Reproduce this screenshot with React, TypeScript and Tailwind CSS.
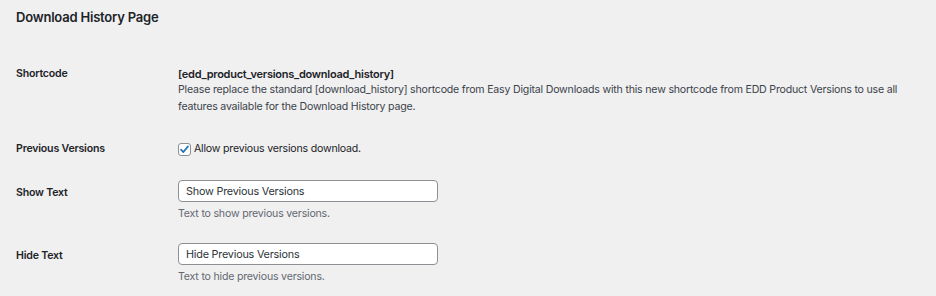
import React, { useState } from 'react';

const font = "font-['Inter','Liberation_Sans',sans-serif]";

type RowProps = {
	label: string;
	labelPad?: string;
	className?: string;
	children: React.ReactNode;
};

const Row = ({ label, labelPad, className, children }: RowProps) => (
	<div className={`flex ${className ?? ''}`}>
		<div className={`w-[162px] shrink-0 font-semibold text-[#1d2327] ${labelPad ?? ''}`}>{label}</div>
		<div className="flex-1">{children}</div>
	</div>
);

const TextField = ({ initial }: { initial: string }) => {
	const [value, setValue] = useState(initial);
	return (
		<input
			value={value}
			onChange={(e) => setValue(e.target.value)}
			className="block w-[260px] h-[22px] px-[7px] bg-white border border-[#8c8f94] rounded-[4px] text-[10.8px] tracking-[-0.2px] text-[#2c3338] outline-none"
		/>
	);
};

export default function App() {
	const [allow, setAllow] = useState(true);

	return (
		<div className={`w-[936px] h-[296px] bg-[#f0f0f1] pl-4 pt-[7px] text-[10.6px] leading-4 tracking-[-0.2px] text-[#1d2327] ${font}`}>
			<h2 className="text-[13px] leading-5 font-semibold tracking-[-0.2px] text-[#1d2327]">Download History Page</h2>

			<Row label="Shortcode" className="mt-[39px]">
				<div className="font-semibold text-[11px] tracking-[-0.25px]">[edd_product_versions_download_history]</div>
				<p className="text-[#3c434a] leading-[16.5px]">
					Please replace the standard [download_history] shortcode from Easy Digital Downloads with this new shortcode from EDD Product Versions to use all
					features available for the Download History page.
				</p>
			</Row>

			<Row label="Previous Versions" className="mt-[26px]">
				<label className="flex items-center gap-[3px] cursor-pointer">
					<button
						type="button"
						onClick={() => setAllow((v) => !v)}
						className="w-[13px] h-[13px] bg-white border border-[#8c8f94] rounded-[3px] flex items-center justify-center"
					>
						{allow && (
							<svg width="11" height="11" viewBox="0 0 12 12">
								<path d="M2.2 6.2 L4.8 8.8 L9.8 2.6" fill="none" stroke="#2271b1" strokeWidth="1.8" strokeLinecap="round" strokeLinejoin="round" />
							</svg>
						)}
					</button>
					<span>Allow previous versions download.</span>
				</label>
			</Row>

			<Row label="Show Text" labelPad="pt-[5px]" className="mt-[23px]">
				<TextField initial="Show Previous Versions" />
				<p className="mt-[4px] text-[#646970]">Text to show previous versions.</p>
			</Row>

			<Row label="Hide Text" labelPad="pt-[5px]" className="mt-[21px]">
				<TextField initial="Hide Previous Versions" />
				<p className="mt-[4px] text-[#646970]">Text to hide previous versions.</p>
			</Row>
		</div>
	);
}
